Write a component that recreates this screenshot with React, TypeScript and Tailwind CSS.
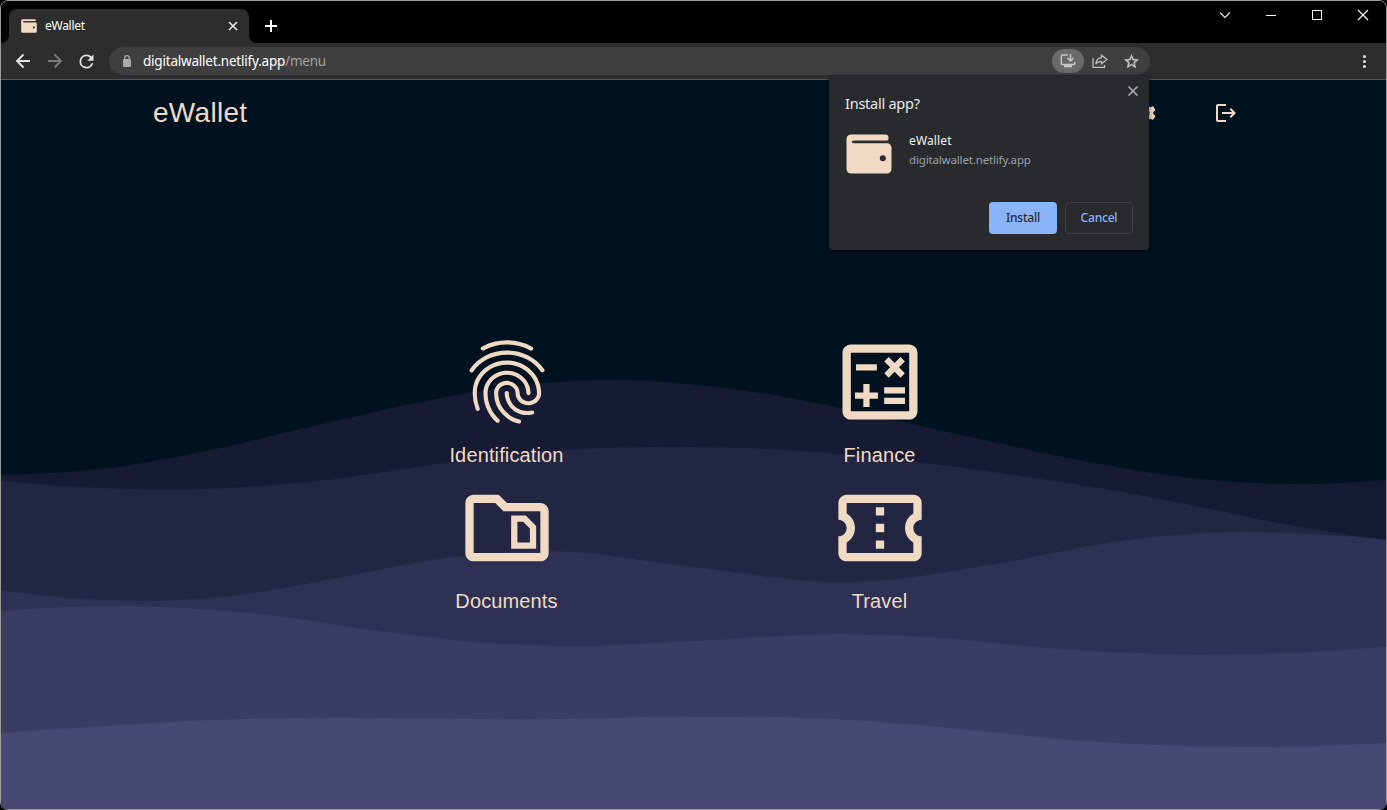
import React from "react";
import {
  MdFingerprint,
  MdOutlineCalculate,
  MdOutlineConfirmationNumber,
  MdOutlineSnippetFolder,
  MdSettings,
} from "react-icons/md";

type Point = [number, number];

const WAVES: { fill: string; points: Point[] }[] = [
  {
    fill: "#161b33",
    points: [[0, 474.5], [103, 468.7], [214, 449.3], [312, 426.500], [402, 406], [500, 388], [603, 380], [754, 392], [899, 421], [1000, 443.5], [1089, 462], [1190, 478], [1299, 484], [1387, 480]],
  },
  {
    fill: "#222643",
    points: [[0, 481], [89, 487.5], [179, 489.7], [312, 481.5], [446, 463], [565, 450], [670, 446.7], [754, 448.3], [841, 454], [1000, 473], [1150, 497], [1290, 525], [1387, 541]],
  },
  {
    fill: "#2e3153",
    points: [[0, 590], [70, 597.7], [147, 600.7], [223, 597], [312, 582.7], [464, 555.7], [549, 551], [694, 567], [841, 582.3], [1000, 563.3], [1107, 543], [1214, 532.5], [1290, 533.3], [1387, 539.9]],
  },
  {
    fill: "#3a3d63",
    points: [[0, 611], [121, 606.3], [254, 613.5], [379, 631], [480, 642.5], [567, 646.3], [694, 641], [841, 634], [920, 636.5], [1060, 649], [1187, 654.7], [1387, 646.3]],
  },
  {
    fill: "#474973",
    points: [[0, 733], [100, 726.500], [214, 720], [312, 717.9], [402, 718.3], [522, 719.3], [700, 717], [843, 719.5], [955, 728.5], [1100, 742], [1236, 747], [1387, 743]],
  },
];

const PAGE_TOP = 80;

// Smooth cubic curve through the points, closed along the bottom edge.
function wavePath(points: Point[]): string {
  const p = points.map(([x, y]): Point => [x, y - PAGE_TOP]);
  const last = p.length - 1;
  const secant = (i: number) => (p[i + 1][1] - p[i][1]) / (p[i + 1][0] - p[i][0]);
  const slope = p.map((pt, i) => {
    if (i === 0) return secant(0);
    if (i === last) return secant(last - 1);
    const h0 = pt[0] - p[i - 1][0];
    const h1 = p[i + 1][0] - pt[0];
    return (h1 * secant(i - 1) + h0 * secant(i)) / (h0 + h1);
  });
  slope[0] = 2 * secant(0) - slope[1];
  slope[last] = 2 * secant(last - 1) - slope[last - 1];
  let d = `M${p[0][0]} ${p[0][1]}`;
  for (let i = 0; i < last; i++) {
    const [x0, y0] = p[i];
    const [x1, y1] = p[i + 1];
    const h = (x1 - x0) / 3;
    d += `C${x0 + h} ${y0 + slope[i] * h} ${x1 - h} ${y1 - slope[i + 1] * h} ${x1} ${y1}`;
  }
  return `${d}V730H0Z`;
}

function WalletIcon({ className, hole }: { className: string; hole: string }) {
  return (
    <svg viewBox="0 0 46 40" className={className}>
      <path
        d="M5 .5h34.500a3 3 0 0 1 3 3.500 2.500 2.500 0 0 1-2.500 2.700H8a1.300 1.300 0 0 0 0 2.600h33a4.500 4.500 0 0 1 4.500 4.500V35a4.500 4.500 0 0 1-4.500 4.500H5A4.500 4.500 0 0 1 .5 35V5A4.500 4.500 0 0 1 5 .5Z"
        fill="#f1dac4"
      />
      <path d="M7 6.700h34v2.300H7a1.150 1.150 0 0 1 0-2.300Z" fill={hole} />
      <circle cx="36.800" cy="24.300" r="3" fill={hole} />
    </svg>
  );
}

function TitleBar() {
  return (
    <div className="flex h-[42px] shrink-0 items-start bg-black pl-2">
      <div className="relative mt-2 flex h-[34px] w-60 items-center rounded-t-lg bg-[#2d2d2d] pl-3">
        <svg viewBox="0 0 8 8" className="absolute -left-2 bottom-0 h-2 w-2">
          <path d="M8 0v8H0a8 8 0 0 0 8-8Z" fill="#2d2d2d" />
        </svg>
        <svg viewBox="0 0 8 8" className="absolute -right-2 bottom-0 h-2 w-2">
          <path d="M0 0v8h8a8 8 0 0 1-8-8Z" fill="#2d2d2d" />
        </svg>
        <WalletIcon className="h-[14px] w-4" hole="#2d2d2d" />
        <span className="ml-2 text-[12px] tracking-[-0.280px] text-white">eWallet</span>
        <svg viewBox="0 0 10 10" className="mr-[11px] ml-auto h-2.5 w-2.5" stroke="#e4e4e4" strokeWidth="1.700">
          <path d="m1 1 8 8M9 1 1 9" />
        </svg>
      </div>
      <svg viewBox="0 0 12 12" className="mt-[19px] ml-4 h-3 w-3" stroke="#fff" strokeWidth="2">
        <path d="M6 0v12M0 6h12" />
      </svg>
      <div className="ml-auto flex h-7 items-center pr-[17px]">
        <svg viewBox="0 0 12 12" className="mr-[35px] h-3 w-3" fill="none" stroke="#f0f0f0" strokeWidth="1.100">
          <path d="m1 3.500 5 5 5-5" />
        </svg>
        <div className="mr-9 h-px w-2.5 bg-white" />
        <div className="mr-[35px] h-2.5 w-2.5 border border-white" />
        <svg viewBox="0 0 12 12" className="h-3 w-3" stroke="#fff" strokeWidth="1.200">
          <path d="m1 1 10 10M11 1 1 11" />
        </svg>
      </div>
    </div>
  );
}

function Toolbar() {
  return (
    <div className="flex h-[37px] shrink-0 items-center border-b border-[#55575a] bg-[#2d2d2d]">
      <svg viewBox="0 0 16 16" className="ml-3.5 h-4 w-4" fill="none" stroke="#e4e4e4" strokeWidth="1.900">
        <path d="M15 8H2.500M8.500 1.500 2 8l6.500 6.500" />
      </svg>
      <svg viewBox="0 0 16 16" className="ml-4 h-4 w-4" fill="none" stroke="#7b7b7b" strokeWidth="1.900">
        <path d="M1 8h12.500M7.500 1.500 14 8l-6.500 6.500" />
      </svg>
      <svg viewBox="0 0 24 24" className="ml-[13px] h-[21px] w-[21px]" fill="#e4e4e4">
        <path d="M17.650 6.350A7.960 7.960 0 0 0 12 4a8 8 0 1 0 7.730 10h-2.080A6 6 0 1 1 12 6c1.660 0 3.140.69 4.220 1.780L13 11h7V4l-2.350 2.350Z" />
      </svg>
      <div className="ml-3 flex h-7 w-[1041px] items-center rounded-full bg-[#3f3f3f] pl-3.5">
        <svg viewBox="0 0 8 12" className="h-3 w-2" fill="#a9abaf">
          <rect y="4" width="8" height="8" rx="1" />
          <path d="M1.700 5V3a2.300 2.300 0 0 1 4.600 0v2" fill="none" stroke="#a9abaf" strokeWidth="1.200" />
        </svg>
        <div className="ml-3 flex text-[13.500px] tracking-[-0.210px] whitespace-pre">
          <span className="text-white">digitalwallet.netlify.app</span>
          <span className="text-[#a3a3a3]">/menu</span>
        </div>
        <div className="ml-auto flex h-6 w-8 items-center justify-center rounded-full bg-[#6b6b6b]">
          <svg viewBox="0 0 16 14" className="h-3.5 w-4" fill="none" stroke="#c6c6c6" strokeWidth="1.500">
            <path d="M7.500 1H2.500A1.200 1.200 0 0 0 1.300 2.200v7.200a1.200 1.200 0 0 0 1.200 1.200h11a1.200 1.200 0 0 0 1.200-1.200V8M10.500 0v6.500M7.500 4l3 3 3-3" />
            <path d="M4 10.500h8v2.700H4z" fill="#c6c6c6" stroke="none" />
          </svg>
        </div>
        <svg viewBox="0 0 16 14" className="ml-2 h-3.5 w-4" fill="none" stroke="#bdbdbd" strokeWidth="1.300">
          <path d="M1 4v9.300h11.500V11" />
          <path d="M9.500 1.200 15 5.500 9.500 9.700V7.300C7 7.300 5 8 3.700 10.300 4 6.500 6.200 4 9.500 3.600Z" />
        </svg>
        <svg viewBox="0 0 24 24" className="mr-2.5 ml-[15px] h-[17px] w-[17px]" fill="#c6c6c6" stroke="#c6c6c6" strokeWidth=".6">
          <path d="m22 9.240-7.190-.62L12 2 9.190 8.630 2 9.240l5.460 4.730L5.820 21 12 17.270 18.180 21l-1.630-7.030L22 9.240ZM12 15.400l-3.760 2.270 1-4.280-3.320-2.880 4.380-.38L12 6.100l1.710 4.040 4.380.38-3.320 2.880 1 4.280L12 15.400Z" />
        </svg>
      </div>
      <svg viewBox="0 0 3 13" className="mr-5 ml-auto h-[13px] w-[3px]" fill="#e4e4e4">
        <circle cx="1.500" cy="1.500" r="1.500" />
        <circle cx="1.500" cy="6.500" r="1.500" />
        <circle cx="1.500" cy="11.500" r="1.500" />
      </svg>
    </div>
  );
}

function InstallDialog() {
  return (
    <div className="absolute top-[75px] left-[828px] flex h-[174px] w-80 flex-col rounded bg-[#292a2d] px-4 shadow-[0_1px_5px_rgba(0,0,0,0.6)]">
      <svg viewBox="0 0 10 10" className="absolute top-2.5 right-[11px] h-2.5 w-2.5" stroke="#9aa0a6" strokeWidth="1.800">
        <path d="m.5.5 9 9M9.500.5l-9 9" />
      </svg>
      <h2 className="mt-4 text-[14.500px] leading-[22px] tracking-[-0.250px] text-[#e8eaed]">Install app?</h2>
      <div className="mt-5 flex items-start">
        <WalletIcon className="ml-[1px] h-10 w-[46px]" hole="#292a2d" />
        <div className="-mt-[3px] ml-[17px]">
          <p className="text-[12px] leading-5 tracking-[0.150px] text-[#f1f3f4]">eWallet</p>
          <p className="text-[11.500px] leading-[18px] tracking-[-0.150px] text-[#9aa0a6]">digitalwallet.netlify.app</p>
        </div>
      </div>
      <div className="mt-auto mb-4 flex justify-end gap-2 text-[12px] font-medium tracking-[-0.200px]">
        <button className="h-8 w-[68px] rounded bg-[#8ab4f8] text-[#292a2d]">Install</button>
        <button className="h-8 w-[68px] rounded border border-[#3f4145] text-[#8ab4f8]">Cancel</button>
      </div>
    </div>
  );
}

const MENU = [
  { label: "Identification", Icon: MdFingerprint },
  { label: "Finance", Icon: MdOutlineCalculate },
  { label: "Documents", Icon: MdOutlineSnippetFolder },
  { label: "Travel", Icon: MdOutlineConfirmationNumber },
];

function WalletPage() {
  return (
    <main className="relative flex-1 overflow-hidden bg-[#001220] font-['Liberation_Sans',Arial,sans-serif] text-[#f1dac4]">
      <svg viewBox="1 0 1385 729" preserveAspectRatio="none" className="absolute inset-0 h-full w-full">
        {WAVES.map((wave) => (
          <path key={wave.fill} d={wavePath(wave.points)} fill={wave.fill} />
        ))}
      </svg>
      <div className="relative flex flex-col">
        <header className="flex h-[66px] items-center pr-[148px] pl-[152px]">
          <h1 className="text-[28px] leading-[42px] tracking-[0.300px]">eWallet</h1>
          <MdSettings className="mr-14 ml-auto h-6 w-6" />
          <svg viewBox="0 0 24 24" className="h-6 w-6" fill="currentColor">
            <path d="m17 7-1.410 1.410L18.170 11H8v2h10.170l-2.580 2.580L17 17l5-5-5-5ZM4 5h8V3H4c-1.100 0-2 .9-2 2v14c0 1.100.9 2 2 2h8v-2H4V5Z" />
          </svg>
        </header>
        <nav className="mt-[186px] ml-[319px] grid grid-cols-[373px_373px] gap-y-2">
          {MENU.map(({ label, Icon }) => (
            <a key={label} className="flex flex-col items-center gap-2">
              <Icon className="h-[100px] w-[100px]" />
              <span className="text-[20px] leading-[30px] tracking-[0.130px]">{label}</span>
            </a>
          ))}
        </nav>
      </div>
    </main>
  );
}

export default function App() {
  return (
    <div className="h-[810px] w-[1387px] overflow-hidden bg-black font-['Noto_Sans','Open_Sans',sans-serif]">
      <div className="relative flex h-full w-full flex-col overflow-hidden rounded-lg border border-[#9b9b9b]">
        <TitleBar />
        <Toolbar />
        <WalletPage />
        <InstallDialog />
      </div>
    </div>
  );
}
